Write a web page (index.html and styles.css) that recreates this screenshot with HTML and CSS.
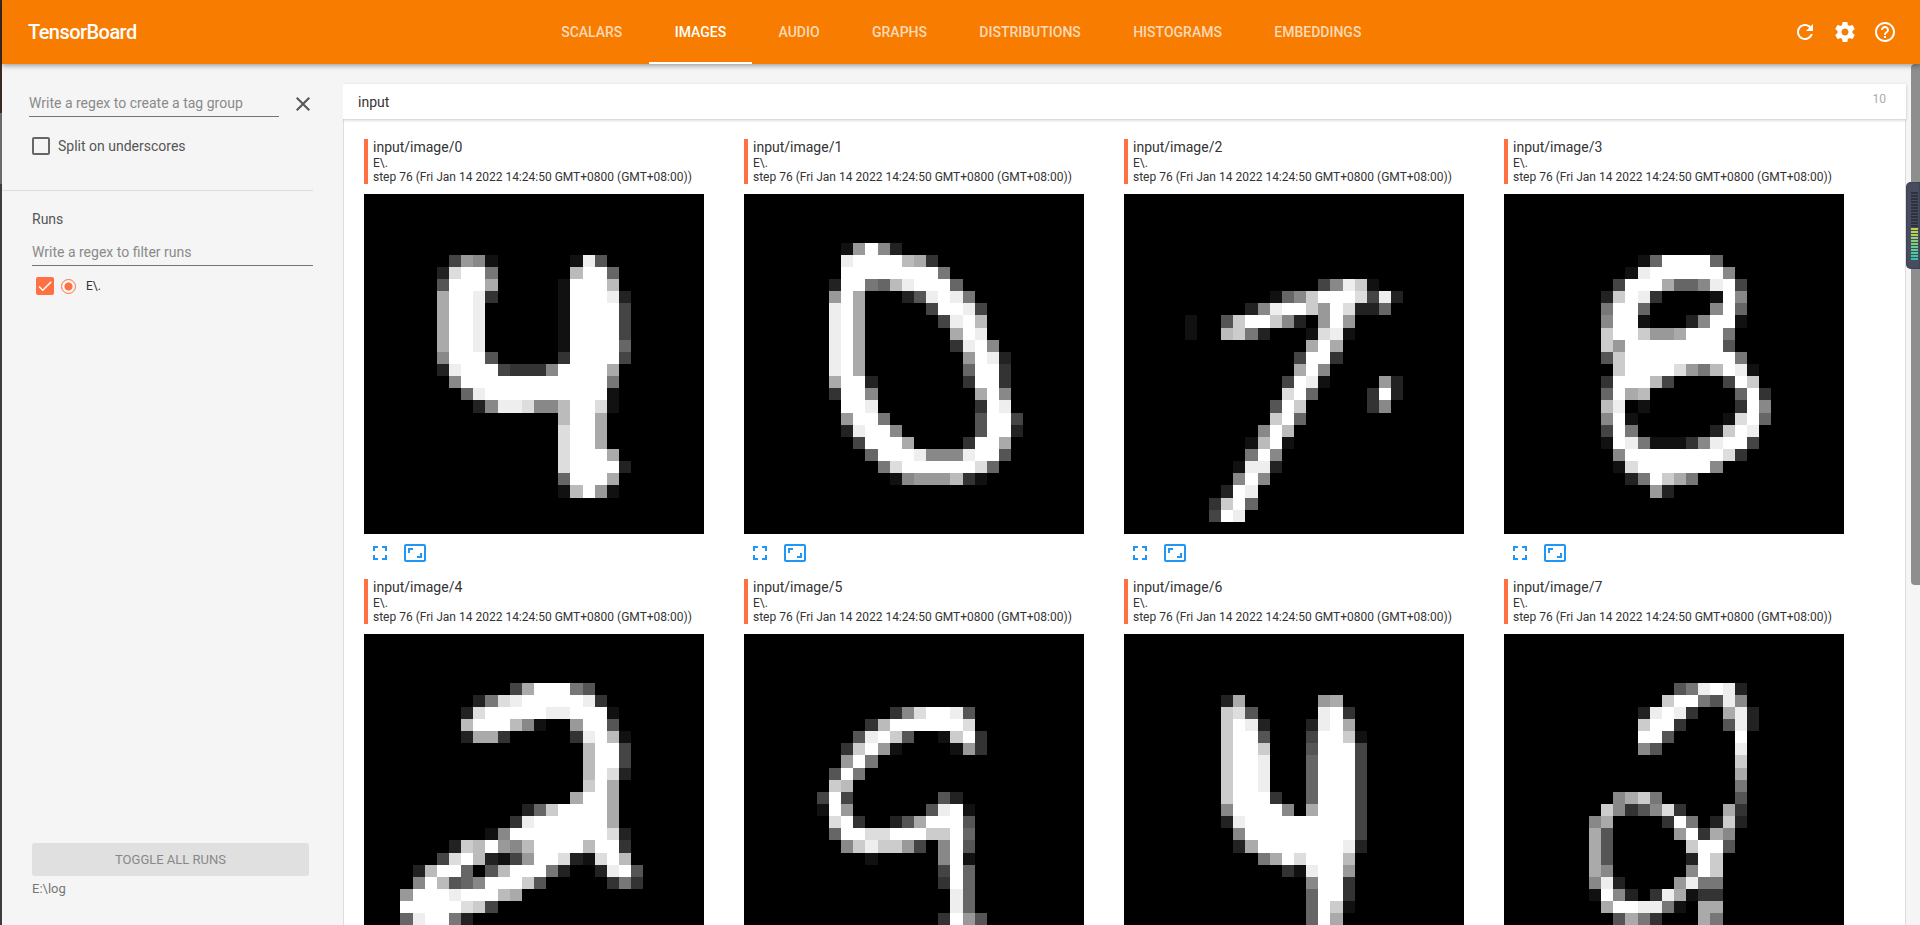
FILE: index.html
```html
<!DOCTYPE html>
<html lang="en">
<head>
<meta charset="utf-8">
<title>TensorBoard</title>
<link rel="stylesheet" href="styles.css">
</head>
<body>
<div class="app">
  <div class="desktop-edge"></div>
  <div class="main">
    <header class="toolbar">
      <div class="brand">TensorBoard</div>
      <nav class="tabs">
        <a class="tab">Scalars</a>
        <a class="tab active">Images</a>
        <a class="tab">Audio</a>
        <a class="tab">Graphs</a>
        <a class="tab">Distributions</a>
        <a class="tab">Histograms</a>
        <a class="tab">Embeddings</a>
      </nav>
      <div class="actions">
        <svg class="action" viewBox="0 0 24 24"><path d="M17.65 6.35C16.2 4.9 14.21 4 12 4c-4.42 0-7.99 3.58-7.99 8s3.57 8 7.99 8c3.73 0 6.84-2.55 7.73-6h-2.08c-.82 2.33-3.04 4-5.65 4-3.31 0-6-2.69-6-6s2.69-6 6-6c1.66 0 3.14.69 4.22 1.78L13 11h7V4l-2.35 2.35z"/></svg>
        <svg class="action" viewBox="0 0 24 24"><path d="M19.43 12.98c.04-.32.07-.64.07-.98s-.03-.66-.07-.98l2.11-1.65c.19-.15.24-.42.12-.64l-2-3.46c-.12-.22-.39-.3-.61-.22l-2.49 1c-.52-.4-1.08-.73-1.69-.98l-.38-2.65C14.46 2.18 14.25 2 14 2h-4c-.25 0-.46.18-.49.42l-.38 2.65c-.61.25-1.17.59-1.69.98l-2.49-1c-.23-.09-.49 0-.61.22l-2 3.46c-.13.22-.07.49.12.64l2.11 1.65c-.04.32-.07.65-.07.98s.03.66.07.98l-2.11 1.65c-.19.15-.24.42-.12.64l2 3.46c.12.22.39.3.61.22l2.49-1c.52.4 1.08.73 1.69.98l.38 2.65c.03.24.24.42.49.42h4c.25 0 .46-.18.49-.42l.38-2.65c.61-.25 1.17-.59 1.69-.98l2.49 1c.23.09.49 0 .61-.22l2-3.46c.12-.22.07-.49-.12-.64l-2.11-1.65zM12 15.5c-1.93 0-3.5-1.57-3.5-3.5s1.57-3.5 3.5-3.5 3.5 1.57 3.5 3.5-1.57 3.5-3.5 3.5z"/></svg>
        <svg class="action" viewBox="0 0 24 24"><path d="M11 18h2v-2h-2v2zm1-16C6.48 2 2 6.48 2 12s4.48 10 10 10 10-4.48 10-10S17.52 2 12 2zm0 18c-4.41 0-8-3.59-8-8s3.59-8 8-8 8 3.59 8 8-3.59 8-8 8zm0-14c-2.21 0-4 1.79-4 4h2c0-1.1.9-2 2-2s2 .9 2 2c0 2-3 1.75-3 5h2c0-2.25 3-2.5 3-5 0-2.21-1.79-4-4-4z"/></svg>
      </div>
    </header>
    <div class="workspace">
      <aside class="sidebar">
        <section class="tag-filter">
          <div class="regex-row">
            <div class="field field-tag">Write a regex to create a tag group</div>
            <svg class="clear" viewBox="0 0 24 24"><path d="M19 6.41L17.59 5 12 10.59 6.41 5 5 6.41 10.59 12 5 17.59 6.41 19 12 13.41 17.59 19 19 17.59 13.41 12z"/></svg>
          </div>
          <label class="split"><span class="box"></span>Split on underscores</label>
        </section>
        <section class="runs">
          <div class="runs-title">Runs</div>
          <div class="field field-runs">Write a regex to filter runs</div>
          <div class="run">
            <span class="box-on"><svg viewBox="0 0 24 24"><path d="M9 16.2L4.8 12l-1.4 1.4L9 19 21 7l-1.4-1.4z"/></svg></span>
            <span class="radio"></span>
            <span class="run-name">E\.</span>
          </div>
        </section>
        <section class="sidebar-foot">
          <div class="toggle">TOGGLE ALL RUNS</div>
          <div class="logdir">E:\log</div>
        </section>
      </aside>
      <main class="content">
        <div class="category">
          <span class="category-name">input</span>
          <span class="category-count">10</span>
        </div>
        <div class="panel">
          <article class="card"><div class="head"><div class="tag">input/image/0</div><div class="meta">E\.</div><div class="meta">step 76 (Fri Jan 14 2022 14:24:50 GMT+0800 (GMT+08:00))</div></div><canvas class="digit" width="28" height="28" data-digit="0"></canvas><div class="tools"><svg class="tool" viewBox="0 0 24 24"><path d="M7 14H5v5h5v-2H7v-3zm-2-4h2V7h3V5H5v5zm12 7h-3v2h5v-5h-2v3zM14 5v2h3v3h2V5h-5z"/></svg><svg class="tool" viewBox="0 0 24 24"><path d="M19 12h-2v3h-3v2h5v-5zM7 9h3V7H5v5h2V9zm14-6H3c-1.1 0-2 .9-2 2v14c0 1.1.9 2 2 2h18c1.1 0 2-.9 2-2V5c0-1.1-.9-2-2-2zm0 16.01H3V4.99h18v14.02z"/></svg></div></article>
          <article class="card"><div class="head"><div class="tag">input/image/1</div><div class="meta">E\.</div><div class="meta">step 76 (Fri Jan 14 2022 14:24:50 GMT+0800 (GMT+08:00))</div></div><canvas class="digit" width="28" height="28" data-digit="1"></canvas><div class="tools"><svg class="tool" viewBox="0 0 24 24"><path d="M7 14H5v5h5v-2H7v-3zm-2-4h2V7h3V5H5v5zm12 7h-3v2h5v-5h-2v3zM14 5v2h3v3h2V5h-5z"/></svg><svg class="tool" viewBox="0 0 24 24"><path d="M19 12h-2v3h-3v2h5v-5zM7 9h3V7H5v5h2V9zm14-6H3c-1.1 0-2 .9-2 2v14c0 1.1.9 2 2 2h18c1.1 0 2-.9 2-2V5c0-1.1-.9-2-2-2zm0 16.01H3V4.99h18v14.02z"/></svg></div></article>
          <article class="card"><div class="head"><div class="tag">input/image/2</div><div class="meta">E\.</div><div class="meta">step 76 (Fri Jan 14 2022 14:24:50 GMT+0800 (GMT+08:00))</div></div><canvas class="digit" width="28" height="28" data-digit="2"></canvas><div class="tools"><svg class="tool" viewBox="0 0 24 24"><path d="M7 14H5v5h5v-2H7v-3zm-2-4h2V7h3V5H5v5zm12 7h-3v2h5v-5h-2v3zM14 5v2h3v3h2V5h-5z"/></svg><svg class="tool" viewBox="0 0 24 24"><path d="M19 12h-2v3h-3v2h5v-5zM7 9h3V7H5v5h2V9zm14-6H3c-1.1 0-2 .9-2 2v14c0 1.1.9 2 2 2h18c1.1 0 2-.9 2-2V5c0-1.1-.9-2-2-2zm0 16.01H3V4.99h18v14.02z"/></svg></div></article>
          <article class="card"><div class="head"><div class="tag">input/image/3</div><div class="meta">E\.</div><div class="meta">step 76 (Fri Jan 14 2022 14:24:50 GMT+0800 (GMT+08:00))</div></div><canvas class="digit" width="28" height="28" data-digit="3"></canvas><div class="tools"><svg class="tool" viewBox="0 0 24 24"><path d="M7 14H5v5h5v-2H7v-3zm-2-4h2V7h3V5H5v5zm12 7h-3v2h5v-5h-2v3zM14 5v2h3v3h2V5h-5z"/></svg><svg class="tool" viewBox="0 0 24 24"><path d="M19 12h-2v3h-3v2h5v-5zM7 9h3V7H5v5h2V9zm14-6H3c-1.1 0-2 .9-2 2v14c0 1.1.9 2 2 2h18c1.1 0 2-.9 2-2V5c0-1.1-.9-2-2-2zm0 16.01H3V4.99h18v14.02z"/></svg></div></article>
          <article class="card"><div class="head"><div class="tag">input/image/4</div><div class="meta">E\.</div><div class="meta">step 76 (Fri Jan 14 2022 14:24:50 GMT+0800 (GMT+08:00))</div></div><canvas class="digit" width="28" height="28" data-digit="4"></canvas></article>
          <article class="card"><div class="head"><div class="tag">input/image/5</div><div class="meta">E\.</div><div class="meta">step 76 (Fri Jan 14 2022 14:24:50 GMT+0800 (GMT+08:00))</div></div><canvas class="digit" width="28" height="28" data-digit="5"></canvas></article>
          <article class="card"><div class="head"><div class="tag">input/image/6</div><div class="meta">E\.</div><div class="meta">step 76 (Fri Jan 14 2022 14:24:50 GMT+0800 (GMT+08:00))</div></div><canvas class="digit" width="28" height="28" data-digit="6"></canvas></article>
          <article class="card"><div class="head"><div class="tag">input/image/7</div><div class="meta">E\.</div><div class="meta">step 76 (Fri Jan 14 2022 14:24:50 GMT+0800 (GMT+08:00))</div></div><canvas class="digit" width="28" height="28" data-digit="7"></canvas></article>
        </div>
      </main>
      <div class="scrollbar"><div class="thumb"></div></div>
    </div>
  </div>
</div>
<div class="meter-widget"><div class="meter"></div></div>
<script src="digits.js"></script>
</body>
</html>
```
FILE: styles.css
```css
* { box-sizing: border-box; }
html, body { margin: 0; height: 100%; overflow: hidden; }
body { font-family: Roboto, "Noto Sans", sans-serif; background: #f5f5f5; color: #212121; }
.app { display: flex; height: 925px; }
.desktop-edge { width: 2px; flex: none; background: linear-gradient(#3b2a22 0 113px, #6a6a6a 113px 184px, #3d3d40 184px 100%); }
.main { flex: 1; min-width: 0; display: flex; flex-direction: column; }

.toolbar { position: relative; z-index: 3; height: 64px; flex: none; display: flex; align-items: center; background: #f77c00; color: #fff; box-shadow: 0 2px 5px rgba(0,0,0,.35); }
.brand { width: 533px; padding-left: 26px; font-size: 20px; font-weight: 500; letter-spacing: -.55px; }
.tabs { display: flex; height: 64px; }
.tab { display: flex; align-items: center; padding: 2px 26.2px 0; font-size: 14px; font-weight: 500; text-transform: uppercase; color: rgba(255,255,255,.72); border-bottom: 2px solid transparent; }
.tab.active { color: #fff; border-bottom-color: #fff; }
.actions { margin-left: auto; display: flex; gap: 16px; padding-right: 23px; }
.action { width: 24px; height: 24px; fill: #fff; }

.workspace { flex: 1; min-height: 0; display: flex; }
.sidebar { width: 341px; flex: none; display: flex; flex-direction: column; background: #f5f5f5; }
.field { font-size: 14px; color: #8a8a8a; height: 25px; line-height: 22px; border-bottom: 1px solid #757575; }
.tag-filter { height: 127px; margin-right: 30px; padding: 28px 0 0 27px; border-bottom: 1px solid #ddd; }
.regex-row { display: flex; align-items: flex-start; }
.field-tag { width: 250px; flex: none; }
.clear { width: 24px; height: 24px; flex: none; margin: 0 -2px 0 12px; fill: #555; }
.split { display: flex; align-items: center; gap: 8px; margin: 20px 0 0 3px; font-size: 14px; color: #555; line-height: 18px; }
.box { width: 18px; height: 18px; border: 2px solid #666; border-radius: 2px; }
.runs { flex: 1; padding: 20px 30px 0 30px; }
.runs-title { font-size: 14px; line-height: 17px; color: #555; }
.field-runs { margin-top: 13px; }
.run { display: flex; align-items: center; margin: 11px 0 0 4px; height: 18px; }
.box-on { width: 18px; height: 18px; border-radius: 2px; background: #ff7043; }
.box-on svg { display: block; width: 18px; height: 18px; fill: #fff; }
.radio { width: 15px; height: 15px; margin-left: 7px; border-radius: 50%; border: 1.5px solid #ff7043; background: radial-gradient(circle, #ff7043 0 3.8px, transparent 4.3px); }
.run-name { margin-left: 10px; font-size: 12px; color: #333; }
.sidebar-foot { height: 82px; padding: 0 34px 0 30px; }
.toggle { height: 33px; line-height: 33px; border-radius: 3px; background: #e0e0e0; color: #888; font-size: 13px; text-align: center; }
.logdir { margin-top: 5px; font-size: 13px; line-height: 16px; color: #777; }

.content { flex: 1; min-width: 0; padding-top: 20px; display: flex; flex-direction: column; overflow: hidden; }
.category { position: relative; z-index: 2; height: 35px; flex: none; display: flex; align-items: center; justify-content: space-between; margin-right: 5px; padding: 0 20px 0 15px; background: #fff; box-shadow: 0 1px 3px rgba(0,0,0,.22); }
.category-name { font-size: 14px; color: #333; }
.category-count { font-size: 12px; color: #aaa; margin-top: -5px; }
.panel { flex: 1; margin-right: 5px; padding: 20px 0 0 20px; background: #fff; border-left: 1px solid #ddd; border-right: 1px solid #ddd; display: grid; grid-template-columns: repeat(4, 340px); grid-auto-rows: 440px; column-gap: 40px; align-content: start; }
.card { min-width: 0; }
.head { display: flow-root; height: 45px; margin-bottom: 10px; padding-left: 5px; border-left: 4px solid #ff7043; }
.tag { font-size: 14px; line-height: 18px; margin-top: -1px; color: #333; }
.meta { font-size: 12px; line-height: 14px; color: #333; }
.digit { display: block; width: 340px; height: 340px; image-rendering: pixelated; background: #000; }
.tools { display: flex; gap: 11px; margin: 7px 0 0 4px; }
.tool { width: 24px; height: 24px; fill: #2196f3; }

.scrollbar { width: 9px; flex: none; }
.thumb { height: 521px; background: #8e8e8e; border-radius: 4px 0 0 4px; }

.meter-widget { position: absolute; left: 1906px; top: 182px; width: 14px; height: 87px; padding: 10px 2px 0 5px; background: #474d5e; border-radius: 5px 0 0 5px; box-shadow: inset 0 0 2px #2c2f3a; }
.meter { height: 68px; background: repeating-linear-gradient(transparent 0 2px, #474d5e 2px 3px), linear-gradient(#2d3140 0 36px, #c9d245 36px, #6fcf86 54px, #27c6ac 68px); }
```
FILE: digits.js
```js
var DIGITS = [
["5|7|4981......1e5","6|6|2dff7......bff6","7|6|5fffa.....1fffb","8|6|affe3.....1fffe2","9|6|affe......1ffff4","10|6|affe......1ffff4","11|6|affe......1ffff4","12|6|affe......1ffff6","13|6|8fff5.....3ffff4","14|6|2efff43338ffffa","15|7|8ffffffffffff7","16|8|6effffffffff1","17|9|28eed88bffd1","18|16|bffa","19|16|dffa","20|16|dffa","21|16|dfffa","22|16|dffff2","23|16|6fffa","24|16|1bf91"],
["4|8|19f820","5|8|effffba3","6|8|ffffffff7","7|7|2ff76befff6","8|7|9fa...25efe7","9|7|efa.....4ffe4","10|7|efa......4efb","11|7|efa.......afe","12|7|efa.......3ef8","13|7|efa........9fe2","14|7|efa........6ff3","15|7|aff2.......3ff3","16|7|3ff8........af8","17|7|0ffe........3fe0","18|7|09ff70......5ff4","19|8|2eff8......5ff2","20|9|4fffa....3ffa","21|10|6fffe888eff5","22|11|7dffffffd6","23|12|18999b31"],
["7|16|48ec1","8|12|168cfffd4e2","9|9|028effc9fd2260","10|5|1..5cffc82.9f9","11|5|1..bc72...1de1","12|8|00.....afa","13|14|4ff3","14|14|af8","15|13|4fe1...092","16|13|df6....3f2","17|12|5fc0....380","18|12|cf6","19|11|8fb","20|10|1bf1","21|10|7f8","22|9|1ee2","23|9|8f8","24|8|2fe0","25|7|3cf6","26|7|4fe"],
["5|11|16ffff60","6|10|1effffff8","7|9|4fffa668ef4","8|8|2cfe3....1f8","9|8|7ff6....08f6","10|8|8ff1...28ff1","11|8|cffc99afff7","12|8|c9ffffffff5","13|8|5cfffffffff7","14|9|cffffd97bfe1","15|8|3fffb40...4fc","16|8|6fab0......6f3","17|8|be010......3f8","18|8|8f1.......1df6","19|8|4f7......2cfe0","20|8|1fe711138eff4","21|9|8ffffffffd3","22|9|1dffffff80","23|10|27fca7","24|12|92"],
["4|12|4afff75","5|9|27defffffe30","6|8|2dfffffeefff1","7|8|bfffb81..9ff5","8|8|2aa30....3efb1","9|18|bff4","10|18|bff4","11|18|bfd2","12|17|0cfa","13|17|affa","14|13|26cffffa","15|11|03effffffa","16|8|0018ffffffffd2","17|7|2cbf98bffffbff3","18|5|04dfb2149ffd21dfb","19|4|2bff6.5bfff72..2ef5","20|4|8fb568fffc5.....373","21|3|9fffefffba0","22|3|fffffdc40","23|3|6eff72"],
["6|12|38dffe5","7|10|3bffffffd0","8|9|5efc5..1cf3","9|8|3cf91....193","10|8|9f7","11|7|5f7","12|6|0cb0","13|6|4f4.......52","14|6|1f9......5ef1","15|6|0df30025afff5","16|7|6ffddfffccf6","17|7|08cecc9408f5","18|9|01.....8f1","19|16|4f6","20|16|3f6","21|16|0e6","22|17|e6","23|16|3f95"],
["5|8|2a......9a","6|8|cd5.....ef3","7|8|cfe2...2efa","8|8|cff5...4ffc1","9|8|cffc...5fff4","10|8|cffe...6fff4","11|8|cffe...6fff4","12|8|cffe...6fff4","13|8|cfff3..6fff4","14|8|8ffff8.afff4","15|8|2efffffffff4","16|9|8fffffffff4","17|9|2afffffffe2","18|10|07afdfffb","19|12|031eff9","20|15|8ff3","21|15|6ff3","22|15|6fc1","23|15|6fa"],
["4|14|57efe2","5|13|cff75e8","6|11|2efe3..ae2","7|11|cff3...5e2","8|11|ff5.....f","9|11|85......e","10|19|c","11|19|a","12|19|7","13|9|8ac7......5","14|8|c8358d3...a3","15|7|8a....3f7.2c2","16|7|a5.....9f3a8","17|7|a5......cff5","18|7|a5......2fc","19|7|a8......8fc","20|7|8e2....9e77","21|7|1f82.3ea133","22|8|affee71.aa","23|9|5a73...a7"]
];

document.querySelectorAll("canvas[data-digit]").forEach(function (canvas) {
  var ctx = canvas.getContext("2d");
  ctx.fillStyle = "#000";
  ctx.fillRect(0, 0, 28, 28);
  DIGITS[+canvas.dataset.digit].forEach(function (line) {
    var parts = line.split("|"), row = +parts[0], col = +parts[1];
    parts[2].split("").forEach(function (ch, i) {
      if (ch === ".") return;
      var v = parseInt(ch, 16) * 17;
      ctx.fillStyle = "rgb(" + v + "," + v + "," + v + ")";
      ctx.fillRect(col + i, row, 1, 1);
    });
  });
});
```
